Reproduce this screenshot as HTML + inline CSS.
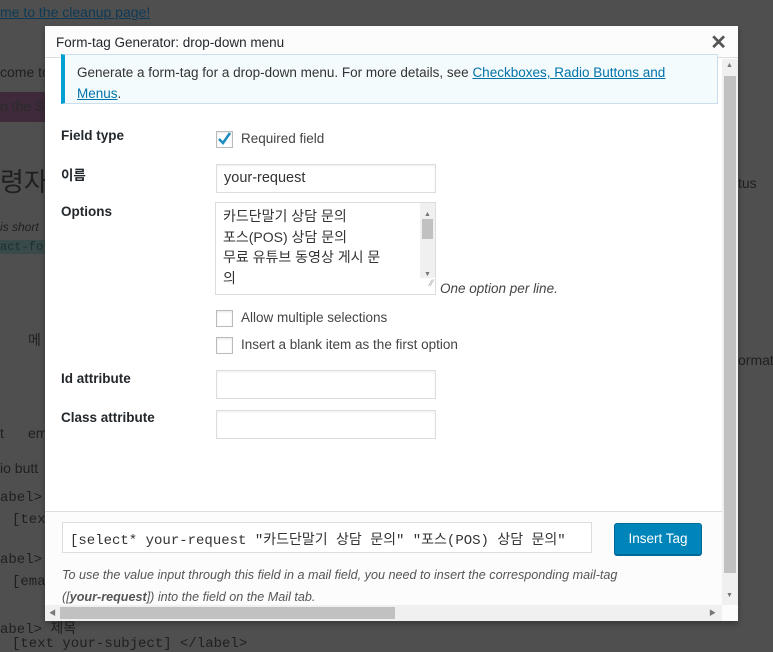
<!DOCTYPE html>
<html><head><meta charset="utf-8">
<style>
*{box-sizing:border-box;margin:0;padding:0}
body{width:773px;height:649px;overflow:hidden;background:#4f4f4f;font-family:"Liberation Sans","Noto Sans CJK KR",sans-serif;font-size:13px;color:#23282d;position:relative}
.bg{position:absolute;color:#1f1f1f;font-size:14px;white-space:nowrap}
.m{position:absolute;left:45px;top:26px;width:693px;height:595px;background:#fcfcfc;box-shadow:0 3px 6px rgba(0,0,0,.3)}
.hd{height:32px;border-bottom:1px solid #ddd;background:#fcfcfc;padding:9px 0 0 11px;font-size:13.5px;color:#23282d}
.x{position:absolute;right:11px;top:4px;font-size:20px;font-weight:bold;color:#555}
.body{position:absolute;left:0;top:33px;width:677px;height:452px;background:#fff}
.note{position:absolute;left:16px;top:28px;width:657px;height:50px;background:#f4fbfd;border:1px solid #cde;border-left:4px solid #00a0d2;padding:7px 12px;font-size:13.5px;line-height:21px;color:#333}
a{color:#0073aa;text-decoration:underline}
.lb{position:absolute;left:16px;font-size:13.5px;font-weight:bold;color:#23282d}
.in{position:absolute;left:171px;width:220px;height:29px;border:1px solid #ddd;background:#fff;box-shadow:inset 0 1px 2px rgba(0,0,0,.07);font-size:14.5px;padding:5px 7px;color:#333}
.cb{position:absolute;left:171px;width:17px;height:17px;border:1px solid #bbb;background:#fff;box-shadow:inset 0 1px 2px rgba(0,0,0,.1)}
.ct{position:absolute;left:196px;font-size:13.5px;color:#444}
.ta{position:absolute;left:170px;width:221px;height:93px;border:1px solid #ddd;background:#fff;font-size:14px;line-height:20.5px;padding:3px 7px;color:#333}
.ft{position:absolute;left:0;top:485px;width:677px;height:94px;background:#fcfcfc;border-top:1px solid #ddd}
.code{position:absolute;left:17px;top:10px;width:530px;height:31px;border:1px solid #ddd;background:#fff;font-family:"Liberation Mono","Noto Sans CJK KR",monospace;font-size:14px;padding:6px 7px;white-space:nowrap;overflow:hidden;color:#333}
.btn{position:absolute;left:569px;top:11px;width:88px;height:32px;background:#0085ba;border:1px solid #006799;border-radius:3px;color:#fff;font-size:13.5px;text-align:center;line-height:30px;box-shadow:0 1px 0 #006799}
.hint{position:absolute;left:17px;top:52px;width:650px;font-style:italic;font-size:12.6px;line-height:22px;color:#555;white-space:nowrap}
.vs{position:absolute;left:677px;top:33px;width:16px;height:546px;background:#f0f0f0}
.hs{position:absolute;left:0;top:579px;width:677px;height:16px;background:#f0f0f0}
.ar{position:absolute;font-size:7px;color:#777}
</style></head><body>
<div class="bg" style="left:0;top:4px;color:#0e3a55;text-decoration:underline">me to the cleanup page!</div>
<div class="bg" style="left:0;top:64px">come to</div>
<div style="position:absolute;left:0;top:92px;width:45px;height:30px;background:#3e2a3a"></div>
<div class="bg" style="left:0;top:98px;color:#2a2a2a">n the S</div>
<div class="bg" style="left:0;top:162px;font-size:26px">령자</div>
<div class="bg" style="left:0;top:220px;font-style:italic;font-size:12px">is short</div>
<div class="bg" style="left:0;top:240px;font-size:12px;font-family:'Liberation Mono';background:#3a4a4a;color:#1a3030">act-for</div>
<div class="bg" style="left:28px;top:330px">메</div>
<div class="bg" style="left:0;top:425px">t</div><div class="bg" style="left:28px;top:425px">em</div>
<div class="bg" style="left:0;top:460px">io butt</div>
<div class="bg" style="left:0;top:490px;font-family:'Liberation Mono'">abel&gt;</div>
<div class="bg" style="left:12px;top:512px;font-family:'Liberation Mono'">[tex</div>
<div class="bg" style="left:0;top:552px;font-family:'Liberation Mono'">abel&gt;</div>
<div class="bg" style="left:12px;top:574px;font-family:'Liberation Mono'">[ema</div>
<div class="bg" style="left:0;top:618px;font-family:'Liberation Mono'">abel&gt; 제목</div>
<div class="bg" style="left:12px;top:636px;font-family:'Liberation Mono'">[text your-subject] &lt;/label&gt;</div>
<div class="bg" style="left:738px;top:175px">tus</div>
<div class="bg" style="left:738px;top:352px">ormat</div>
<div class="m">
 <div class="hd">Form-tag Generator: drop-down menu</div>
 <div class="x">✕</div>
 <div class="body">
  <div class="note" style="top:-5px">Generate a form-tag for a drop-down menu. For more details, see <a>Checkboxes, Radio Buttons and Menus</a>.</div>
  <div class="lb" style="top:69px">Field type</div>
  <div class="cb" style="top:72px"><svg width="17" height="17" viewBox="0 0 17 17" style="position:absolute;left:-1px;top:-2px"><path d="M3 9 L7 13 L14 3" stroke="#1e8cbe" stroke-width="2.6" fill="none"/></svg></div>
  <div class="ct" style="top:72px">Required field</div>
  <div class="lb" style="top:105px">이름</div>
  <div class="in" style="top:105px">your-request</div>
  <div class="lb" style="top:145px">Options</div>
  <div class="ta" style="top:143px">카드단말기 상담 문의<br>포스(POS) 상담 문의<br>무료 유튜브 동영상 게시 문<br>의
   <div style="position:absolute;right:0;top:0;width:15px;height:75px;background:#f0f0f0"><div class="ar" style="left:4px;top:2px">▲</div><div style="position:absolute;left:2px;top:16px;width:11px;height:20px;background:#c1c1c1"></div><div class="ar" style="left:4px;top:62px">▼</div></div>
   <div style="position:absolute;right:2px;bottom:1px;font-size:9px;color:#999">⁄⁄</div>
  </div>
  <div style="position:absolute;left:395px;top:222px;font-style:italic;font-size:13.5px;color:#444">One option per line.</div>
  <div class="cb" style="top:251px"></div><div class="ct" style="top:251px">Allow multiple selections</div>
  <div class="cb" style="top:278px"></div><div class="ct" style="top:278px">Insert a blank item as the first option</div>
  <div class="lb" style="top:312px">Id attribute</div>
  <div class="in" style="top:311px"></div>
  <div class="lb" style="top:351px">Class attribute</div>
  <div class="in" style="top:351px"></div>
 </div>
 <div class="ft">
  <div class="code">[select* your-request "카드단말기 상담 문의" "포스(POS) 상담 문의"</div>
  <div class="btn">Insert Tag</div>
  <div class="hint">To use the value input through this field in a mail field, you need to insert the corresponding mail-tag<br>([<b>your-request</b>]) into the field on the Mail tab.</div>
 </div>
 <div class="vs"><div class="ar" style="left:4px;top:3px">▲</div><div style="position:absolute;left:2px;top:17px;width:12px;height:497px;background:#c1c1c1"></div><div class="ar" style="left:4px;top:533px">▼</div></div>
 <div class="hs"><div class="ar" style="left:4px;top:3px">◀</div><div style="position:absolute;left:15px;top:2px;width:335px;height:12px;background:#c1c1c1"></div><div class="ar" style="left:664px;top:3px">▶</div></div>
</div>
</body></html>
